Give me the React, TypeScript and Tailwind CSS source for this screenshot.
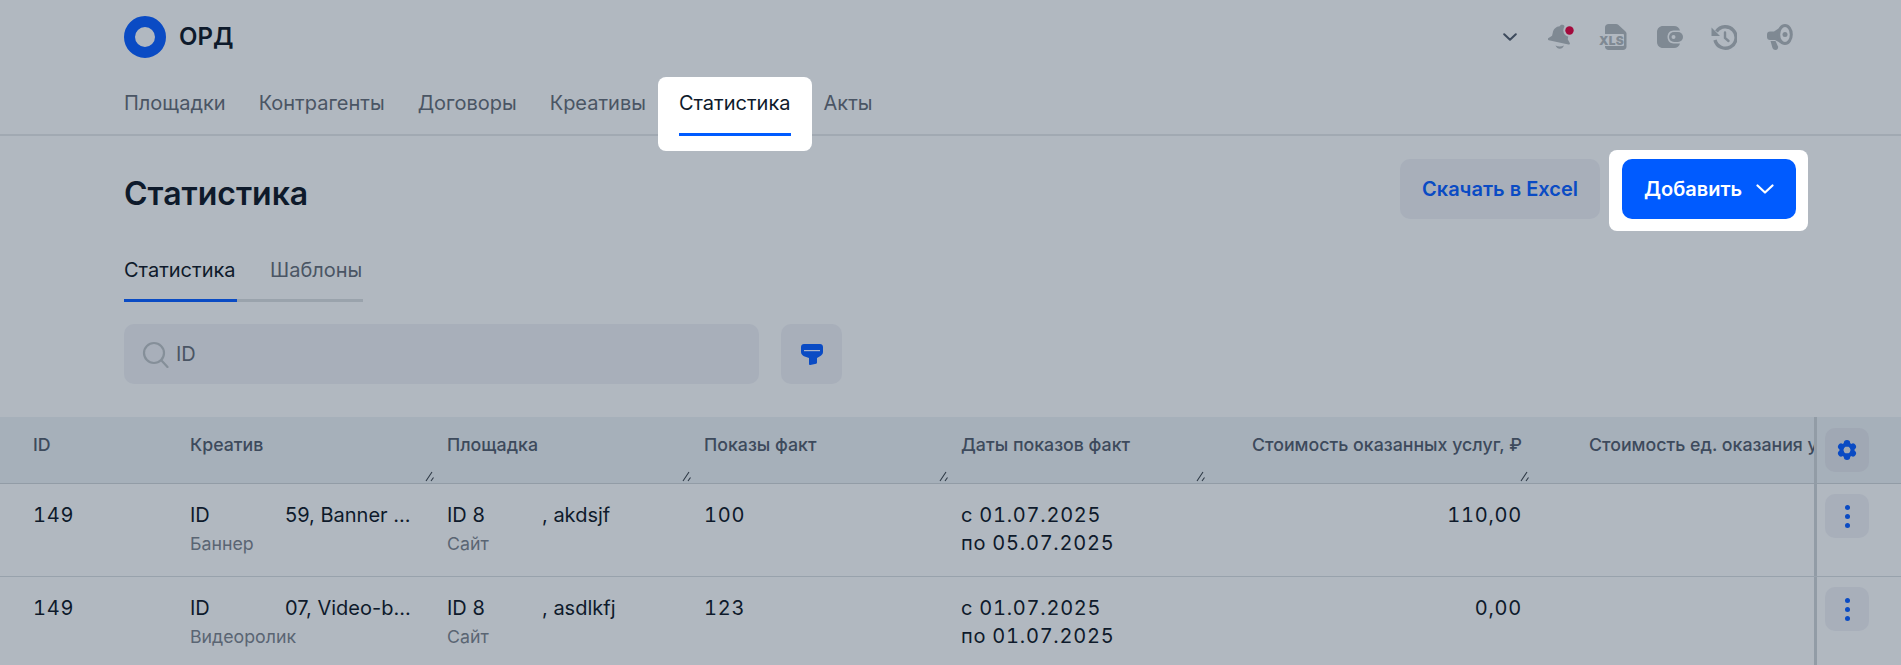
import React from "react";

const navItems = ["Площадки", "Контрагенты", "Договоры", "Креативы", "Статистика", "Акты"];

const columns = [
  { title: "ID", width: "w-[157px]" },
  { title: "Креатив", width: "w-[257px]", grip: true },
  { title: "Площадка", width: "w-[257px]", grip: true },
  { title: "Показы факт", width: "w-[257px]", grip: true },
  { title: "Даты показов факт", width: "w-[257px]", grip: true },
];

const rows = [
  {
    id: "149",
    creative: "59, Banner ...",
    creativeType: "Баннер",
    site: ", akdsjf",
    shows: "100",
    from: "с 01.07.2025",
    to: "по 05.07.2025",
    cost: "110,00",
  },
  {
    id: "149",
    creative: "07, Video-b...",
    creativeType: "Видеоролик",
    site: ", asdlkfj",
    shows: "123",
    from: "с 01.07.2025",
    to: "по 01.07.2025",
    cost: "0,00",
  },
];

function Grip() {
  return (
    <svg width="12" height="12" viewBox="0 0 12 12" className="absolute right-[11px] bottom-[1px] text-[#2f3a47]">
      <path d="M2 11 8 2M7 11 9.500 7.500" stroke="currentColor" strokeWidth="1.100" fill="none" />
    </svg>
  );
}

function Logo() {
  return (
    <svg width="42" height="42" viewBox="0 0 42 42">
      <circle cx="21" cy="21" r="15.500" fill="none" stroke="#0a4bc4" strokeWidth="11" />
    </svg>
  );
}

function BellIcon() {
  return (
    <svg width="26" height="26" viewBox="0 0 26 26" fill="#7f8993">
      <g transform="rotate(12 12 13)">
        <path d="M12 0.500c1.300 0 2.300.8 2.500 2 3.600 1 5.500 4 5.500 7.500v3.500l2.800 3.300c.6.800.1 1.700-1 1.700H1.700c-1.100 0-1.600-.9-1-1.700L4 13.500V10c0-3.500 1.900-6.500 5.500-7.500.2-1.200 1.200-2 2.500-2Z" />
      </g>
      <path d="M7.500 21.500c2.800 1.200 5.800 1.200 8.500 0-.8 2-2.400 3.300-4.200 3.300s-3.500-1.300-4.300-3.300Z" />
      <circle cx="21.500" cy="6.500" r="6.200" fill="#b1b8c0" />
      <circle cx="21.500" cy="6.500" r="4.200" fill="#a30a3c" />
    </svg>
  );
}

function XlsIcon() {
  return (
    <svg width="28" height="26" viewBox="0 0 28 26">
      <path d="M6 3.500C6 1.500 7.500 0 9.500 0H17c1 0 1.800.4 2.500 1l6.500 6c.7.700 1.500 1.600 1.500 2.500v13c0 2-1.500 3.500-3.500 3.500H9.500C7.500 26 6 24.500 6 22.500Z" fill="#7f8993" />
      <rect x="0" y="10" width="25" height="12" rx="1" fill="#b1b8c0" />
      <text x="0" y="20.800" fontFamily="Inter, sans-serif" fontWeight="900" fontSize="12" letterSpacing="0.300" fill="#7f8993">XLS</text>
    </svg>
  );
}

function WalletIcon() {
  return (
    <svg width="26" height="22" viewBox="0 0 26 22">
      <path d="M6 0h11c3 0 5.500 1.800 6 4.500H16.500C13 4.500 10.500 7.300 10.500 11s2.500 6.500 6 6.500H23c-.5 2.700-3 4.500-6 4.500H6c-3.400 0-6-2.600-6-6V6c0-3.400 2.600-6 6-6Z" fill="#7f8993" />
      <rect x="12" y="6" width="14" height="10" rx="5" fill="#7f8993" />
      <circle cx="16.500" cy="11" r="2" fill="#b1b8c0" />
    </svg>
  );
}

function HistoryIcon() {
  return (
    <svg width="26" height="25" viewBox="0 0 26 25" fill="none" stroke="#7f8993" strokeWidth="3.400">
      <path d="M5.500 6.500A10.700 10.700 0 1 1 4 15" />
      <path d="M0.500 2.500v8.500h8.500z" fill="#7f8993" stroke="none" />
      <path d="M14 7.500v5.500l3.500 3" strokeWidth="2.400" strokeLinecap="round" />
    </svg>
  );
}

function MegaphoneIcon() {
  return (
    <svg width="26" height="26" viewBox="0 0 26 26">
      <path d="M0 10.500c0-1.800 1.200-3 3-3h4L15 2v18L8 16H3c-1.800 0-3-1.200-3-3Z" fill="#7f8993" />
      <path d="M3.500 17h5l2.500 5.500c.6 1.700-.8 3.500-2.500 3.500-1.400 0-2.400-.8-3-2Z" fill="#7f8993" />
      <ellipse cx="18" cy="10.500" rx="6.300" ry="9" fill="#b1b8c0" stroke="#7f8993" strokeWidth="3" />
      <circle cx="18" cy="10.500" r="2.500" fill="#7f8993" />
    </svg>
  );
}

function ChevronDown({ className }: { className: string }) {
  return (
    <svg width="14" height="8" viewBox="0 0 14 8" fill="none" className={className}>
      <path d="M1.200 1.200 7 6.800l5.800-5.600" stroke="currentColor" strokeWidth="2" strokeLinecap="round" strokeLinejoin="round" />
    </svg>
  );
}

function SearchIcon() {
  return (
    <svg width="27" height="27" viewBox="0 0 27 27" fill="none" stroke="#858f99" strokeWidth="2.200">
      <circle cx="12" cy="12" r="10" />
      <path d="m19.500 19.500 6 6.500" strokeLinecap="round" />
    </svg>
  );
}

function FilterIcon() {
  return (
    <svg width="22" height="21" viewBox="0 0 22 21">
      <path d="M3 0h16c1.700 0 3 1.300 3 3v5c0 2-1.500 3.500-3 4.300L16 14v4.500c0 .6-.3 1-.8 1.200l-6 1.300c-.7.1-1.200-.4-1.200-1V14l-5-1.700C1.500 11.500 0 10 0 8V3c0-1.700 1.300-3 3-3Z" fill="#0a4bc4" />
      <rect x="3" y="6" width="16" height="1.200" fill="#a8b4cc" />
    </svg>
  );
}

function GearIcon() {
  const lobes = [0, 60, 120, 180, 240, 300];
  return (
    <svg width="20" height="20" viewBox="0 0 20 20">
      {lobes.map((angle) => (
        <circle key={angle} cx="10" cy="3.300" r="3.200" fill="#0a4bc4" transform={`rotate(${angle} 10 10)`} />
      ))}
      <circle cx="10" cy="10" r="5.500" fill="none" stroke="#0a4bc4" strokeWidth="4" />
    </svg>
  );
}

function KebabButton() {
  return (
    <button className="w-[44px] h-[44px] rounded-[10px] bg-[#a8afba] flex flex-col items-center justify-center gap-[4px]">
      <span className="w-[5px] h-[5px] rounded-full bg-[#0a4bc4]" />
      <span className="w-[5px] h-[5px] rounded-full bg-[#0a4bc4]" />
      <span className="w-[5px] h-[5px] rounded-full bg-[#0a4bc4]" />
    </button>
  );
}

export default function App() {
  return (
    <div className="w-[1901px] h-[665px] overflow-hidden bg-[#b1b8c0] font-['Inter',sans-serif] text-[#0e1a2b]">
      <header className="h-[136px] border-b-[2px] border-[#a1a9b2]">
        <div className="h-[74px] pl-[124px] pr-[108px] flex items-center justify-between">
          <div className="flex items-center gap-[13px]">
            <Logo />
            <span className="text-[24px] font-semibold">ОРД</span>
          </div>
          <div className="flex items-center">
            <ChevronDown className="text-[#3d4a5c] mr-[31px]" />
            <div className="mr-[25px]"><BellIcon /></div>
            <div className="mr-[30px]"><XlsIcon /></div>
            <div className="mr-[28px]"><WalletIcon /></div>
            <div className="mr-[30px]"><HistoryIcon /></div>
            <MegaphoneIcon />
          </div>
        </div>
        <nav className="h-[62px] pl-[124px] flex gap-[33px] text-[20px] leading-[26px] text-[#4a5564]">
          {navItems.map((item) => (
            <div key={item} className="relative h-[62px] pt-[16px]">
              {item === "Статистика" ? (
                <>
                  <span className="absolute left-[-21px] right-[-21px] top-[3px] h-[74px] bg-white rounded-[8px]" />
                  <span className="relative text-[#0e1a2b]">{item}</span>
                  <span className="absolute left-0 right-0 top-[59px] h-[3px] bg-[#005bff]" />
                </>
              ) : (
                item
              )}
            </div>
          ))}
        </nav>
      </header>

      <section className="pl-[124px] pr-[105px] pt-[23px] flex items-start justify-between h-[95px]">
        <h1 className="text-[32px] leading-[70px] font-semibold">Статистика</h1>
        <div className="flex gap-[22px]">
          <button className="w-[200px] h-[60px] rounded-[10px] bg-[#a8afba] text-[#0a4bc4] text-[20px] font-semibold">
            Скачать в Excel
          </button>
          <div className="relative">
            <span className="absolute left-[-13px] right-[-12px] top-[-9px] bottom-[-12px] rounded-[8px] bg-white" />
            <button className="relative w-[174px] h-[60px] rounded-[10px] bg-[#005bff] text-white text-[20px] font-semibold flex items-center justify-center gap-[14px]">
              Добавить
              <svg width="18" height="10" viewBox="0 0 18 10" fill="none">
                <path d="M1.500 1.500 9 8.500l7.500-7" stroke="currentColor" strokeWidth="2.200" strokeLinecap="round" strokeLinejoin="round" />
              </svg>
            </button>
          </div>
        </div>
      </section>

      <div className="pl-[124px] flex text-[20px] leading-[28px]">
        <div className="h-[71px] pt-[25px] w-[113px] border-b-[3px] border-[#0a4bc4]">Статистика</div>
        <div className="h-[71px] pt-[25px] pl-[33px] w-[126px] border-b-[3px] border-[#9aa3ac] text-[#4a5564]">Шаблоны</div>
      </div>

      <div className="pl-[124px] mt-[22px] flex gap-[22px]">
        <div className="w-[635px] h-[60px] rounded-[10px] bg-[#a8afba] pl-[18px] flex items-center gap-[7px] text-[20px] text-[#4a5564]">
          <SearchIcon />
          ID
        </div>
        <button className="w-[61px] h-[60px] rounded-[10px] bg-[#a8afba] flex items-center justify-center">
          <FilterIcon />
        </button>
      </div>

      <div className="mt-[33px]">
        <div className="h-[67px] bg-[#a6b0ba] border-b-[1px] border-[#929ca6] flex text-[17.75px] font-medium text-[#3d4a5c]">
          <div className="w-[1814px] shrink-0 pl-[33px] flex overflow-hidden">
            {columns.map((col) => (
              <div key={col.title} className={`${col.width} relative shrink-0 pt-[15px]`}>
                {col.title}
                {col.grip && <Grip />}
              </div>
            ))}
            <div className="w-[325px] relative shrink-0 pt-[15px] text-right pr-[20px] ml-[-1px] whitespace-nowrap">
              Стоимость оказанных услуг, ₽
              <Grip />
            </div>
            <div className="shrink-0 pt-[15px] whitespace-nowrap ml-[47px]">Стоимость ед. оказания услуг</div>
          </div>
          <div className="w-[87px] border-l-[3px] border-[#929ca6] pl-[8px] pt-[11px]">
            <button className="w-[44px] h-[44px] rounded-[10px] bg-[#a0a8b4] flex items-center justify-center">
              <GearIcon />
            </button>
          </div>
        </div>

        {rows.map((row) => (
          <div key={row.creative} className="h-[93px] border-b-[1px] border-[#98a2ac] flex text-[20px] leading-[28px]">
            <div className="w-[1814px] shrink-0 pl-[33px] pt-[17px] flex">
              <div className="w-[157px] tabular-nums tracking-[0.75px]">{row.id}</div>
              <div className="w-[257px]">
                <div className="flex">
                  <span className="w-[95px]">ID</span>
                  {row.creative}
                </div>
                <div className="mt-[1px] text-[17.75px] text-[#5a6573]">{row.creativeType}</div>
              </div>
              <div className="w-[257px]">
                <div className="flex">
                  <span className="w-[95px]">ID 8</span>
                  {row.site}
                </div>
                <div className="mt-[1px] text-[17.75px] text-[#5a6573]">Сайт</div>
              </div>
              <div className="w-[257px] tabular-nums tracking-[0.75px]">{row.shows}</div>
              <div className="w-[257px] tabular-nums tracking-[0.75px]">
                <div>{row.from}</div>
                <div>{row.to}</div>
              </div>
              <div className="w-[305px] text-right ml-[-1px] tabular-nums tracking-[0.75px]">{row.cost}</div>
            </div>
            <div className="w-[87px] border-l-[3px] border-[#929ca6] pl-[8px] pt-[10px]">
              <KebabButton />
            </div>
          </div>
        ))}
      </div>
    </div>
  );
}
